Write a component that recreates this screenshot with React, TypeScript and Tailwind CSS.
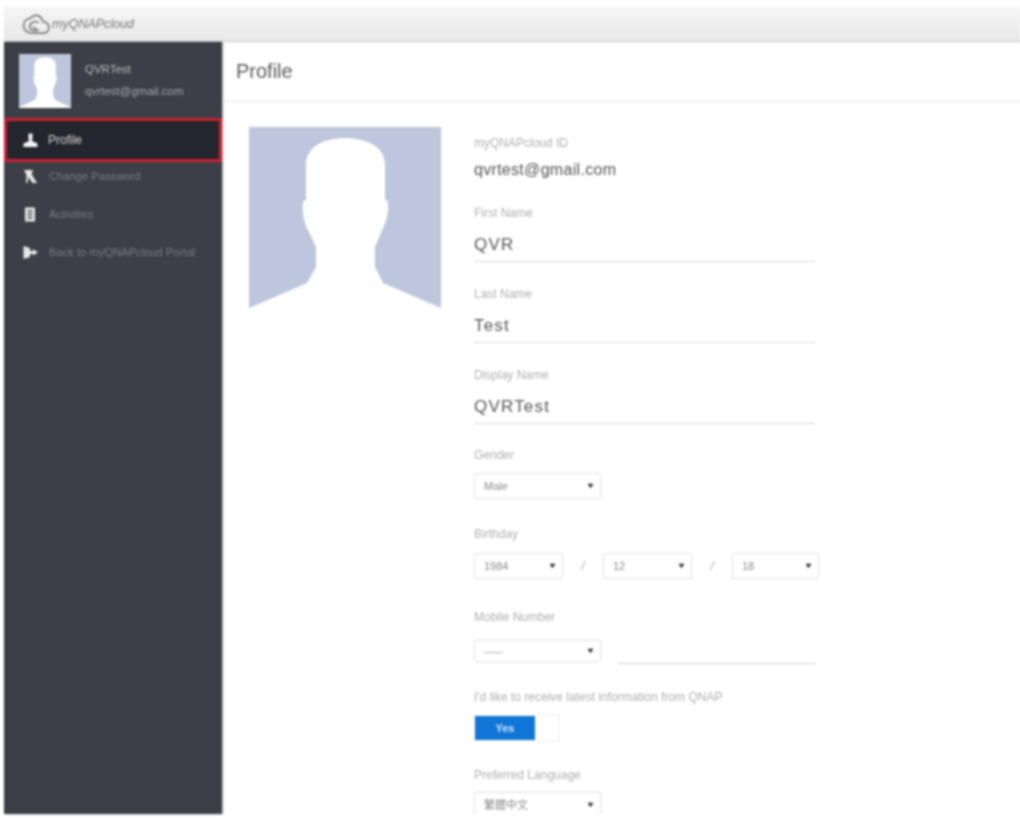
const SILHOUETTE =
  'M0 0H192V181L134 156L126 140V120L133 103C137 96 140 85 139 75L136 72V38C136 20 118 11 96 11C74 11 57 20 57 38V72L54 75C53 85 55 96 59 103L67 120V140L58 156L0 181Z';

function Avatar({ className }: { className: string }) {
  return (
    <svg viewBox="0 0 192 183" preserveAspectRatio="none" className={className}>
      <path d={SILHOUETTE} fill="#bdc6dc" />
    </svg>
  );
}

function Label({ children, className }: { children: string; className: string }) {
  return <div className={`text-[12px] leading-[14px] text-[#b0b0b0] ${className}`}>{children}</div>;
}

function Field({ label, value, className }: { label: string; value: string; className: string }) {
  return (
    <div className={className}>
      <Label className="">{label}</Label>
      <div className="mt-[13px] h-[29px] border-b border-[#d9d9d9] text-[17px] leading-[24px] tracking-[1.2px] text-[#555]">
        {value}
      </div>
    </div>
  );
}

function Select({ value, className }: { value: string; className: string }) {
  return (
    <div
      className={`flex items-center justify-between rounded-[2px] border border-[#e6e6e6] pl-[9px] pr-[6px] text-[11px] text-[#8a8a8a] shadow-[0_0_2px_rgba(0,0,0,0.08)] ${className}`}
    >
      <span>{value}</span>
      <svg viewBox="0 0 8 6" className="h-[6px] w-[7px]">
        <path d="M0.5 0.5H7.5L4 5.5Z" fill="#333" />
      </svg>
    </div>
  );
}

const NAV = [
  {
    label: 'Change Password',
    icon: 'M1 1H10L8.5 5L14 14H9.5L5.5 8L4.5 14H3L3.5 6Z',
  },
  {
    label: 'Activities',
    icon: 'M2 0.5H12V14.5H2ZM4.5 3.5V5H9.5V3.5ZM4.5 6.8V8.3H9.5V6.8ZM4.5 10V11.5H9.5V10Z',
  },
  {
    label: 'Back to myQNAPcloud Portal',
    icon: 'M0.5 1L7 3V6H10V4L15 7.5L10 10.5V9H7V12L0.5 14Z',
  },
];

export default function App() {
  return (
    <div className="h-[825px] w-[1020px] overflow-hidden bg-white pl-[4px] pt-[7px] font-['Liberation_Sans',Arial,sans-serif] blur-[0.8px]">
      {/* top bar */}
      <div className="flex h-[35px] items-center border-b border-[#c9c9c9] bg-gradient-to-b from-[#f6f6f6] to-[#e8e8e8] pl-[18px]">
        <svg viewBox="0 0 30 22" className="h-[21px] w-[29px]" fill="none" stroke="#7d7d7d" strokeWidth="1.8">
          <path d="M23 20H10C4.5 20 1.5 16 1.5 12C1.5 7.5 5 4.5 8.5 4.5C10.5 2 13 1 15.5 1.5C19 2.2 21 5 21.5 8C25 8 28 10.5 28 14C28 17.5 26 20 23 20Z" />
          <path d="M17 9C13.5 6.5 8 8.5 8 13C8 17 13 18.5 16 16.5C13 16 12 14.5 12.5 13" />
        </svg>
        <span className="ml-[1px] text-[12.5px] italic text-[#777]">myQNAPcloud</span>
      </div>

      <div className="flex h-[772px]">
        {/* sidebar */}
        <aside className="w-[218px] shrink-0 bg-[#3d3f47] shadow-[1px_0_2px_rgba(0,0,0,0.35)]">
          <div className="flex h-[76px] pl-[15px] pt-[12px]">
            <Avatar className="h-[54px] w-[52px] bg-white" />
            <div className="ml-[14px] mt-[8px] text-[11.5px] text-[#a5a7ac]">
              <div className="leading-[14px] text-[#b9bbbf]">QVRTest</div>
              <div className="mt-[8px] leading-[14px]">qvrtest@gmail.com</div>
            </div>
          </div>

          <div className="flex h-[44px] items-center border-[3px] border-[#c8202f] bg-[#25262d] pl-[16px] text-[12px] text-[#d8d8d8]">
            <svg viewBox="0 0 15 15" className="h-[15px] w-[15px]" fill="#f2f2f2">
              <path d="M5.5 0.5H9.5V5.5L9 8L14.5 10.5V14H0.5V10.5L6 8L5.5 5.5Z" />
            </svg>
            <span className="ml-[10px]">Profile</span>
          </div>

          <nav className="flex flex-col gap-[10px]">
            {NAV.map((item) => (
              <div key={item.label} className="flex h-[28px] items-center pl-[19px] text-[11.2px] text-[#797b82]">
                <svg viewBox="0 0 15 15" className="h-[15px] w-[15px]" fill="#e8e8e8" fillRule="evenodd">
                  <path d={item.icon} />
                </svg>
                <span className="ml-[11px] pt-[1px]">{item.label}</span>
              </div>
            ))}
          </nav>
        </aside>

        {/* main */}
        <main className="min-w-0 flex-1 overflow-hidden">
          <div className="flex h-[60px] items-center border-b border-[#e6e6e6] pb-[2px] pl-[14px] text-[20px] text-[#5a5a5a]">
            Profile
          </div>

          <div className="flex pl-[27px] pt-[25px]">
            <Avatar className="h-[183px] w-[192px] shrink-0" />

            <div className="ml-[33px] w-[346px]">
              <Label className="mt-[9px]">myQNAPcloud ID</Label>
              <div className="mt-[8px] text-[16px] leading-[24px] tracking-[0.3px] text-[#555]">qvrtest@gmail.com</div>

              <Field label="First Name" value="QVR" className="mt-[24px] w-[341px]" />
              <Field label="Last Name" value="Test" className="mt-[25px] w-[341px]" />
              <Field label="Display Name" value="QVRTest" className="mt-[25px] w-[341px]" />

              <Label className="mt-[24px]">Gender</Label>
              <Select value="Male" className="mt-[11px] h-[26px] w-[127px]" />

              <Label className="mt-[28px]">Birthday</Label>
              <div className="mt-[12px] flex h-[26px] items-center">
                <Select value="1984" className="h-[26px] w-[89px]" />
                <span className="w-[40px] text-center text-[13px] italic text-[#aaa]">/</span>
                <Select value="12" className="h-[26px] w-[89px]" />
                <span className="w-[40px] text-center text-[13px] italic text-[#aaa]">/</span>
                <Select value="18" className="h-[26px] w-[87px]" />
              </div>

              <Label className="mt-[31px]">Mobile Number</Label>
              <div className="mt-[16px] flex items-start">
                <Select value="-----" className="h-[22px] w-[127px]" />
                <div className="ml-[17px] mt-[23px] h-[1px] w-[198px] bg-[#d0d0d0]" />
              </div>

              <Label className="mt-[26px]">I'd like to receive latest information from QNAP</Label>
              <div className="mt-[11px] flex h-[26px] w-[86px] rounded-[2px] border border-[#eee]">
                <div className="flex w-[60px] items-center justify-center bg-[#0f76d8] text-[11px] font-bold text-[#cfe3f7]">
                  Yes
                </div>
              </div>

              <Label className="mt-[27px]">Preferred Language</Label>
              <Select
                value="繁體中文"
                className="mt-[10px] h-[26px] w-[127px] font-['Liberation_Sans','Noto_Sans_CJK_TC',sans-serif]"
              />
            </div>
          </div>
        </main>
      </div>
    </div>
  );
}
